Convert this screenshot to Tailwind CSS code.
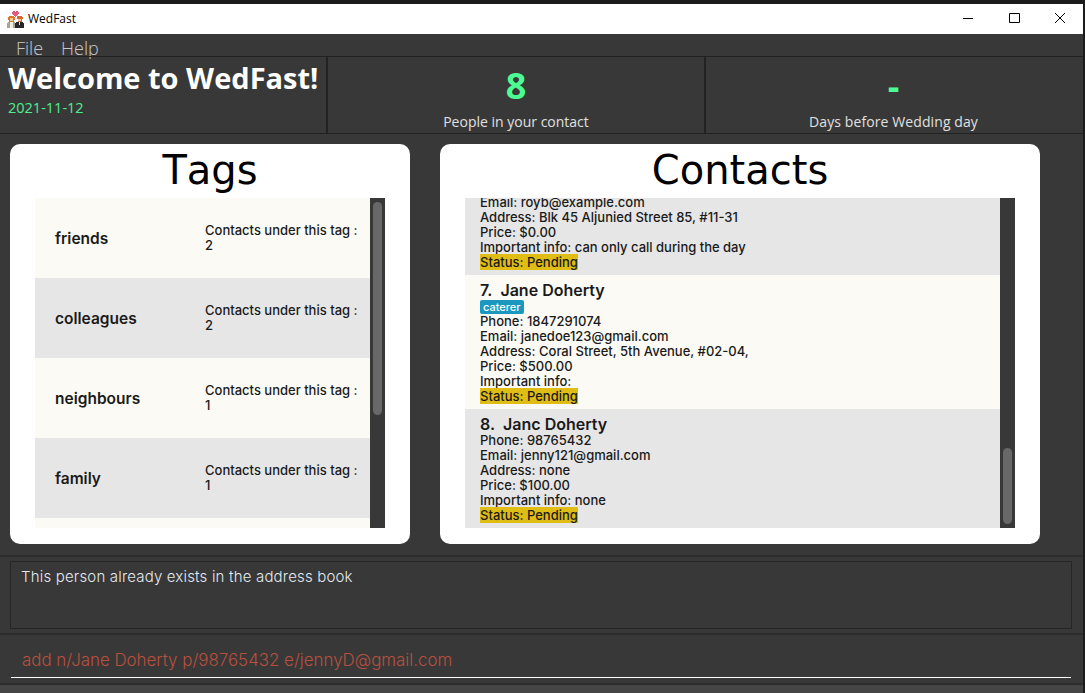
<!DOCTYPE html>
<html lang="en">

<head>
  <meta charset="UTF-8">
  <title>WedFast</title>
  <script src="https://cdn.jsdelivr.net/npm/@tailwindcss/browser@4"></script>
</head>

<body class="bg-[#383838] h-[693px] w-[1085px] overflow-hidden font-['Inter',sans-serif]">
  <div class="h-[693px] flex flex-col border-r-2 border-[#1c1c1c]">
    <div class="h-1 shrink-0 bg-[#1c1c1c]"></div>

    <!-- title bar -->
    <div class="h-[30px] shrink-0 bg-white flex items-center pl-[7px] text-black">
      <svg class="w-[17px] h-[17px]" viewBox="0 0 17 17" shape-rendering="crispEdges">
        <path d="M6 0h2v1h1V0h2v1h1v2h-1v1h-1v1H9v1H8V5H7V4H6V3H5V1h1z" fill="#e8577d" />
        <path d="M2 5h5v1h1v3H7v2H2V9H1V6h1z" fill="#d9762c" />
        <path d="M3 7h3v3H3z" fill="#f0c9a0" />
        <path d="M10 5h5v1h1v2h-1v3h-4V8h-1z" fill="#d9662c" />
        <path d="M11 8h3v2h-3z" fill="#f0c9a0" />
        <path d="M1 11h7v6H0v-5h1z" fill="#a9a594" />
        <path d="M3 11h3v6H3z" fill="#ecebe4" />
        <path d="M9 11h7v1h1v5H8v-5h1z" fill="#26262b" />
        <path d="M12 11h1v3h-1z" fill="#d8d8d8" />
      </svg>
      <span class="ml-[4px] text-[12px] font-['Open_Sans',sans-serif]">WedFast</span>
      <div class="ml-auto flex items-center">
        <svg class="w-[46px] h-[30px]" viewBox="0 0 46 30"><path d="M18 14.5h10" stroke="#000" /></svg>
        <svg class="w-[46px] h-[30px]" viewBox="0 0 46 30"><path d="M18.5 9.5h10v9h-10z" fill="none" stroke="#000" /></svg>
        <svg class="w-[46px] h-[30px]" viewBox="0 0 46 30"><path d="M18 9l10 10M28 9L18 19" fill="none" stroke="#000" /></svg>
      </div>
    </div>

    <!-- menu -->
    <div class="h-[22px] shrink-0 flex gap-[18px] pl-4 text-[18px] leading-[28px] text-[#c8c8c8] font-light font-['Open_Sans',sans-serif]">
      <span class="h-[22px]">File</span>
      <span class="h-[22px]">Help</span>
    </div>

    <!-- header -->
    <div class="h-[78px] shrink-0 flex border-y border-[#222222]">
      <div class="w-[328px] pl-2 border-r-2 border-[#222222]">
        <h1 class="text-[29px] leading-[42px] font-bold whitespace-nowrap text-white font-['Open_Sans',sans-serif]">Welcome to WedFast!</h1>
        <p class="text-[14.5px] leading-[17px] text-[#4dee8f] font-['Open_Sans',sans-serif]">2021-11-12</p>
      </div>
      <div class="w-[378px] flex flex-col items-center border-r-2 border-[#222222] font-['Open_Sans',sans-serif]">
        <span class="text-[36px] leading-[50px] mt-[4px] font-bold text-[#4dfb94]">8</span>
        <span class="text-[14px] leading-[20px] mt-[1px] text-[#e0e0e0]">People in your contact</span>
      </div>
      <div class="flex-1 flex flex-col items-center pr-[2px] font-['Open_Sans',sans-serif]">
        <span class="text-[36px] leading-[50px] mt-[4px] font-bold text-[#4dfb94]">-</span>
        <span class="text-[14px] leading-[20px] mt-[1px] tracking-[0.1px] text-[#e0e0e0]">Days before Wedding day</span>
      </div>
    </div>

    <!-- main -->
    <div class="h-[421px] shrink-0 flex gap-[30px] pl-[10px] pt-[10px]">
      <section class="w-[400px] h-[400px] bg-white rounded-[10px] px-[25px] flex flex-col">
        <h2 class="h-[54px] text-center text-[40px] leading-[52px] [font-kerning:none] text-black font-['DejaVu_Sans',sans-serif]">Tags</h2>
        <div class="h-[330px] flex">
          <div class="flex-1 overflow-hidden bg-[#fbfaf5] text-[#1a1a1a]">
            <div class="h-20 bg-[#fbfaf5] flex items-center pl-5">
              <span class="w-[150px] pt-[2px] text-[15.5px] font-semibold">friends</span>
              <span class="flex-1 text-[13px] leading-[15px] font-medium">Contacts under this tag :<br>2</span>
            </div>
            <div class="h-20 bg-[#e6e6e6] flex items-center pl-5">
              <span class="w-[150px] pt-[2px] text-[15.5px] font-semibold">colleagues</span>
              <span class="flex-1 text-[13px] leading-[15px] font-medium">Contacts under this tag :<br>2</span>
            </div>
            <div class="h-20 bg-[#fbfaf5] flex items-center pl-5">
              <span class="w-[150px] pt-[2px] text-[15.5px] font-semibold">neighbours</span>
              <span class="flex-1 text-[13px] leading-[15px] font-medium">Contacts under this tag :<br>1</span>
            </div>
            <div class="h-20 bg-[#e6e6e6] flex items-center pl-5">
              <span class="w-[150px] pt-[2px] text-[15.5px] font-semibold">family</span>
              <span class="flex-1 text-[13px] leading-[15px] font-medium">Contacts under this tag :<br>1</span>
            </div>
          </div>
          <div class="w-[15px] bg-[#383838] pt-1 px-[3px]">
            <div class="h-[213px] rounded-[5px] bg-[#686868]"></div>
          </div>
        </div>
      </section>

      <section class="w-[600px] h-[400px] bg-white rounded-[10px] px-[25px] flex flex-col">
        <h2 class="h-[54px] text-center text-[40px] leading-[52px] text-black font-['DejaVu_Sans',sans-serif]">Contacts</h2>
        <div class="h-[330px] flex">
          <div class="flex-1 overflow-hidden flex flex-col justify-end text-[13px] leading-[15px] font-medium text-[#1a1a1a]">
            <div class="shrink-0 bg-[#e6e6e6] pl-[15px] pb-[5px]">
              <p>Email: royb@example.com</p>
              <p>Address: Blk 45 Aljunied Street 85, #11-31</p>
              <p>Price: $0.00</p>
              <p>Important info: can only call during the day</p>
              <p><span class="bg-[#e0bd14]">Status: Pending</span></p>
            </div>
            <div class="shrink-0 bg-[#fbfaf5] pl-[15px] pt-[6px] pb-[5px]">
              <p class="text-[16px] leading-[18px] font-semibold">7.&nbsp; Jane Doherty</p>
              <p class="h-[15px] flex items-center"><span class="bg-[#1a98c0] text-white text-[11px] leading-[14px] px-[3px] rounded-[2px]">caterer</span></p>
              <p>Phone: 1847291074</p>
              <p>Email: janedoe123@gmail.com</p>
              <p>Address: Coral Street, 5th Avenue, #02-04,</p>
              <p>Price: $500.00</p>
              <p>Important info:</p>
              <p><span class="bg-[#e0bd14]">Status: Pending</span></p>
            </div>
            <div class="shrink-0 bg-[#e6e6e6] pl-[15px] pt-[6px] pb-[5px]">
              <p class="text-[16px] leading-[18px] font-semibold">8.&nbsp; Janc Doherty</p>
              <p>Phone: 98765432</p>
              <p>Email: jenny121@gmail.com</p>
              <p>Address: none</p>
              <p>Price: $100.00</p>
              <p>Important info: none</p>
              <p><span class="bg-[#e0bd14]">Status: Pending</span></p>
            </div>
          </div>
          <div class="w-[15px] bg-[#383838] pt-[250px] px-[3px]">
            <div class="h-[76px] rounded-[5px] bg-[#686868]"></div>
          </div>
        </div>
      </section>
    </div>

    <!-- result -->
    <div class="h-[80px] shrink-0 border-y-2 border-[#2c2c2c] px-[10px] py-[4px]">
      <div class="h-[68px] w-[1062px] border border-[#262626] px-[10px] pt-[6px] text-[15px] leading-[18px] tracking-[0.18px] font-light text-[#e4e9f0]">This person already exists in the address book</div>
    </div>

    <!-- command box -->
    <div class="h-[48px] shrink-0 px-[11px]">
      <div class="h-[43px] w-[1060px] border-b border-white pl-[11px] pt-[15px] text-[16.9px] leading-[20px] font-light text-[#b8503e]">add n/Jane Doherty p/98765432 e/jennyD@gmail.com</div>
    </div>

    <!-- status bar -->
    <div class="flex-1 bg-[#454545] border-t-2 border-[#2c2c2c]"></div>
  </div>
</body>

</html>
